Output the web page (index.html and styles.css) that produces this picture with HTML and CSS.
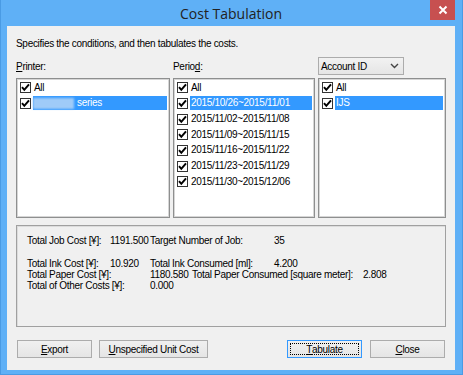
FILE: index.html
```html
<!DOCTYPE html>
<html lang="en">
<head>
    <meta charset="UTF-8">
    <title>Cost Tabulation</title>
    <link rel="stylesheet" href="styles.css">
</head>
<body>
    <div class="window">
        <div class="titlebar">
            <span></span>
            <span class="title">Cost Tabulation</span>
            <button class="close" title="Close">
                <svg width="10" height="10" viewBox="0 0 10 10">
                    <path d="M1.5 1.5 L8.5 8.5 M8.5 1.5 L1.5 8.5" stroke="#fff" stroke-width="2"></path>
                </svg>
            </button>
        </div>
        <div class="client">
            <p class="intro">Specifies the conditions, and then tabulates the costs.</p>

            <div class="panes">
                <div class="pane pane-printer">
                    <div class="pane-head"><span class="label"><u>P</u>rinter:</span></div>
                    <ul class="list">
                        <li><span class="check"></span><span class="item">All</span></li>
                        <li class="selected"><span class="check"></span><span class="item"><span class="blur"></span>series</span></li>
                    </ul>
                </div>
                <div class="pane pane-period">
                    <div class="pane-head"><span class="label">Perio<u>d</u>:</span></div>
                    <ul class="list">
                        <li><span class="check"></span><span class="item">All</span></li>
                        <li class="selected"><span class="check"></span><span class="item">2015/10/26~2015/11/01</span></li>
                        <li><span class="check"></span><span class="item">2015/11/02~2015/11/08</span></li>
                        <li><span class="check"></span><span class="item">2015/11/09~2015/11/15</span></li>
                        <li><span class="check"></span><span class="item">2015/11/16~2015/11/22</span></li>
                        <li><span class="check"></span><span class="item">2015/11/23~2015/11/29</span></li>
                        <li><span class="check"></span><span class="item">2015/11/30~2015/12/06</span></li>
                    </ul>
                </div>
                <div class="pane pane-account">
                    <div class="pane-head">
                        <div class="combo">
                            <span>Account ID</span>
                            <svg width="9" height="6" viewBox="0 0 9 6">
                                <path d="M1 1 L4.5 4.5 L8 1" fill="none" stroke="#444" stroke-width="1.4"></path>
                            </svg>
                        </div>
                    </div>
                    <ul class="list">
                        <li><span class="check"></span><span class="item">All</span></li>
                        <li class="selected"><span class="check"></span><span class="item">IJS</span></li>
                    </ul>
                </div>
            </div>

            <div class="summary">
                <div class="row row-job">
                    <span class="c1">Total Job Cost [¥]:</span>
                    <span class="c2">1191.500</span>
                    <span class="c3">Target Number of Job:</span>
                    <span>35</span>
                </div>
                <div class="row row-ink">
                    <span class="c1">Total Ink Cost [¥]:</span>
                    <span class="c2">10.920</span>
                    <span class="c3">Total Ink Consumed [ml]:</span>
                    <span>4.200</span>
                </div>
                <div class="row">
                    <span class="c12">Total Paper Cost [¥]:</span>
                    <span class="c-paper">1180.580</span>
                    <span class="c-paper-label">Total Paper Consumed [square meter]:</span>
                    <span>2.808</span>
                </div>
                <div class="row">
                    <span class="c12">Total of Other Costs [¥]:</span>
                    <span>0.000</span>
                </div>
            </div>

            <div class="buttons">
                <button class="btn btn-export"><u>E</u>xport</button>
                <button class="btn btn-unit"><u>U</u>nspecified Unit Cost</button>
                <span class="spacer"></span>
                <button class="btn btn-default"><span class="focus"><u>T</u>abulate</span></button>
                <button class="btn btn-close"><u>C</u>lose</button>
            </div>
        </div>
    </div>

    <script>
        document.querySelectorAll('.check').forEach(function(box) {
            box.innerHTML = '<svg width="11" height="11" viewBox="0 0 11 11"><path d="M2 5.2 L4.3 7.8 L9 2.4" fill="none" stroke="#000" stroke-width="2"></path></svg>';
        });
    </script>
</body>
</html>
```

FILE: styles.css
```css
:root {
    --frame-color: #5fb0f6;
    --face-color: #f0f0f0;
    --select-color: #3399ff;
    --text-color: #000;
}
body {
    margin: 0;
    padding: 0;
    font-family: 'Liberation Sans', Arial, sans-serif;
    font-size: 10px;
    letter-spacing: -0.3px;
    color: var(--text-color);
}
.window {
    width: 463px;
    height: 375px;
    box-sizing: border-box;
    background-color: var(--frame-color);
    border: 1px solid #4a9be4;
    border-top: none;
    display: flex;
    flex-direction: column;
}
.titlebar {
    height: 26px;
    display: grid;
    grid-template-columns: 1fr auto 1fr;
    align-items: start;
    padding-right: 7px;
}
.title {
    font-family: 'Open Sans', 'Noto Sans', sans-serif;
    font-size: 14px;
    letter-spacing: 0;
    color: #222;
    line-height: 28px;
    padding-left: 6px;
}
.close {
    justify-self: end;
    width: 25px;
    height: 20px;
    border: none;
    padding: 0;
    background-color: #c75050;
    display: flex;
    align-items: center;
    justify-content: center;
}
.client {
    flex: 1;
    margin: 0 7px 4px 6px;
    background-color: var(--face-color);
    padding: 0 9px;
}
.intro {
    margin: 11px 0 0;
    line-height: 13px;
    padding-left: 0;
}
.panes {
    display: flex;
    gap: 3px;
    margin-top: 7px;
}
.pane-printer { width: 154px; }
.pane-period { width: 142px; }
.pane-account { width: 128px; }
.pane-head {
    height: 18px;
    display: flex;
    align-items: center;
}
.label {
    padding-left: 0;
}
u {
    text-decoration: underline;
    text-underline-offset: 1px;
}
.combo {
    width: 86px;
    height: 18px;
    box-sizing: border-box;
    border: 1px solid #acacac;
    background: linear-gradient(#f2f2f2, #e5e5e5);
    display: flex;
    align-items: center;
    justify-content: space-between;
    padding: 0 4px 0 2px;
}
.list {
    list-style: none;
    margin: 3px 0 0;
    padding: 1px;
    height: 140px;
    box-sizing: border-box;
    background-color: #fff;
    border: 1px solid #8e8f8f;
    box-shadow: inset 0 0 0 1px #d6d6d6;
}
.list li {
    height: 15.67px;
    display: flex;
    align-items: center;
}
.check {
    width: 11px;
    height: 11px;
    box-sizing: border-box;
    border: 1px solid #333;
    background-color: #fff;
    margin-left: 2px;
    margin-right: 2px;
    display: flex;
    align-items: center;
    justify-content: center;
    flex-shrink: 0;
}
.check svg {
    display: block;
    margin: -1px;
}
.item {
    flex: 1;
    height: 14px;
    line-height: 14px;
    padding-left: 1px;
    display: flex;
    align-items: center;
    margin-right: 1px;
}
.selected .item {
    background-color: var(--select-color);
    color: #fff;
}
.blur {
    width: 41px;
    height: 11px;
    margin-left: -1px;
    margin-right: 3px;
    background-color: #9fcbf8;
    filter: blur(1.2px);
}
.summary {
    margin-top: 7px;
    height: 102px;
    box-sizing: border-box;
    border: 1px solid #a0a0a0;
    box-shadow: inset 1px 1px 0 #dcdcdc;
    padding: 9px 0 0 10px;
}
.row {
    display: flex;
    line-height: 11px;
    height: 11px;
    white-space: nowrap;
}
.row-ink {
    margin-top: 12px;
}
.c1 { width: 83px; }
.c2 { width: 40px; }
.c3 { width: 124px; }
.c12 { width: 123px; }
.c-paper { width: 42px; }
.c-paper-label { width: 171px; }
.buttons {
    display: flex;
    gap: 7px;
    margin-top: 13px;
    padding-left: 1px;
}
.spacer {
    flex: 1;
}
.btn {
    height: 18px;
    box-sizing: border-box;
    border: 1px solid #acacac;
    background: linear-gradient(#f0f0f0, #e5e5e5);
    font-family: inherit;
    font-size: 10px;
    letter-spacing: -0.3px;
    color: #000;
    padding: 0;
}
.btn-export { width: 75px; }
.btn-unit { width: 109px; }
.btn-default {
    width: 75px;
    border-color: #3399ff;
    padding: 2px;
    margin-right: 1px;
}
.btn-close { width: 75px; margin-right: 1px; }
.focus {
    display: flex;
    height: 100%;
    align-items: center;
    justify-content: center;
    box-sizing: border-box;
    border: 1px dotted #000;
}
```
